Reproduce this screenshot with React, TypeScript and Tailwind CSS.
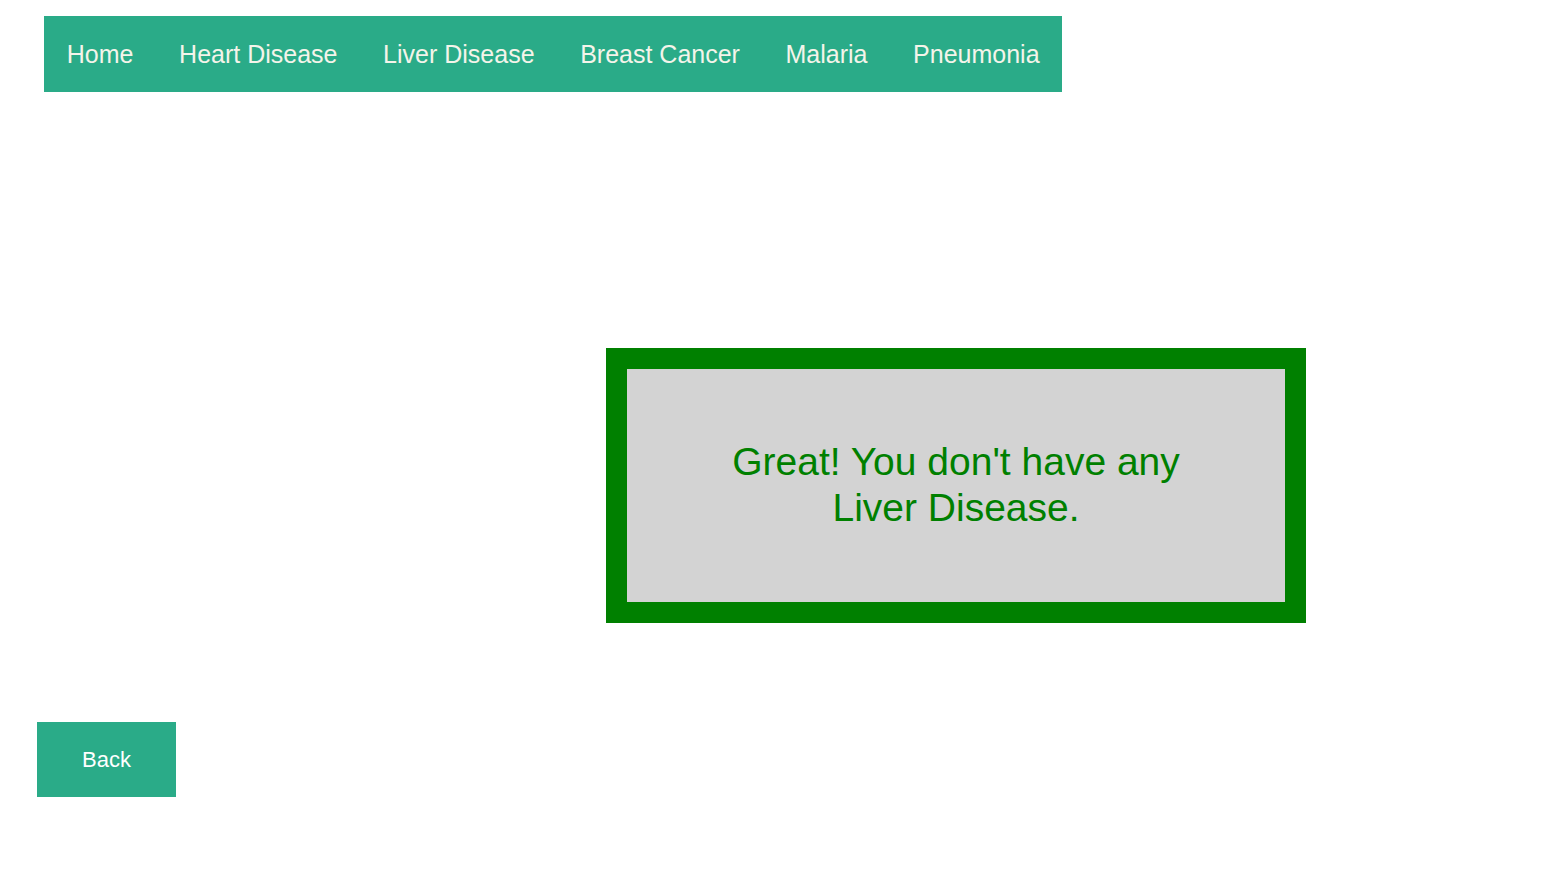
const links = ["Home", "Heart Disease", "Liver Disease", "Breast Cancer", "Malaria", "Pneumonia"];

export default function App() {
  return (
    <div className="min-h-[888px] bg-white font-['Liberation_Sans',Arial,sans-serif]">
      <div className="pl-[44px] pt-[16px]">
        <nav className="inline-flex h-[76px] items-center bg-[#2aab88]">
          {links.map((l) => (
            <a key={l} href="#" className="px-[22.8px] text-[25px] leading-none text-[#f4f4ea]">
              {l}
            </a>
          ))}
        </nav>
      </div>

      <div className="ml-[606px] mt-[256px] w-[700px] border-[21px] border-[#008000] bg-[#d3d3d3] px-[60px] pt-[70px] pb-[71px] text-center text-[39px] leading-[46px] text-[#008000]">
        Great! You don't have any Liver Disease.
      </div>

      <div className="pl-[37px] pt-[99px]">
        <button className="h-[75px] w-[139px] bg-[#2aab88] text-[22px] text-white">Back</button>
      </div>
    </div>
  );
}
